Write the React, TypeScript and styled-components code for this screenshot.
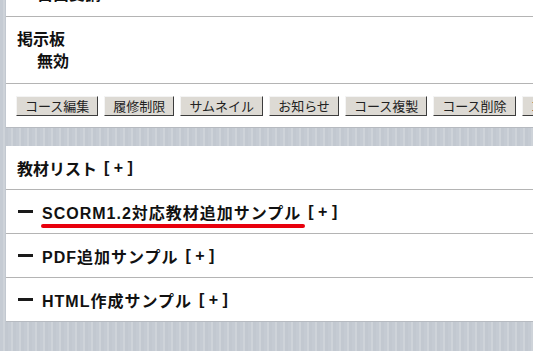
import styled, { createGlobalStyle } from "styled-components";

const GlobalStyle = createGlobalStyle`
  html, body {
    margin: 0;
    padding: 0;
    overflow: hidden;
  }
  body {
    width: 533px;
    height: 351px;
    font-family: "Liberation Sans", "Noto Sans CJK JP", sans-serif;
    background: repeating-linear-gradient(
      90deg,
      #c5cbd3 0px,
      #c5cbd3 3px,
      #ced3d9 3px,
      #ced3d9 5px,
      #c2c8d0 5px,
      #c2c8d0 8px
    );
  }
`;

const Page = styled.div`
  display: flex;
  flex-direction: column;
  gap: 18px;
  padding-left: 6px;
  width: 560px;
  margin-top: -50px;
`;

const Panel = styled.div`
  background: #fff;
  border-bottom: 1px solid #b6bac0;
  display: flex;
  flex-direction: column;
`;

const InfoBlock = styled.div`
  padding: 12px 0 10px 11px;
  border-bottom: 1px solid #b4b4b4;
  font-weight: 700;
  font-size: 16px;
  line-height: 22px;
  color: #111;
  .value {
    padding-left: 20px;
  }
`;

const ButtonRow = styled.div`
  display: flex;
  align-items: center;
  gap: 6px;
  height: 43px;
  padding-left: 10px;
`;

const Button = styled.button`
  flex-shrink: 0;
  height: 20px;
  padding: 0 8px;
  font-family: "Noto Sans CJK JP", sans-serif;
  font-size: 13px;
  line-height: 18px;
  color: #222;
  background: #dddad4;
  border: 1px solid;
  border-color: #f4f4f4 #3c3c3c #3c3c3c #f4f4f4;
`;

const ListRow = styled.div`
  display: flex;
  align-items: center;
  height: 43px;
  padding-left: 11px;
  font-size: 16px;
  font-weight: 700;
  color: #111;
  & + & {
    border-top: 1px solid #b4b4b4;
  }
  .plus {
    margin-left: 7px;
    white-space: pre;
  }
`;

const Dash = styled.span`
  width: 15px;
  height: 3px;
  background: #1a1a1a;
  margin: 0 9px 0 1px;
`;

const Title = styled.span<{ $marked?: boolean }>`
  position: relative;
  letter-spacing: 1px;
  ${(p) =>
    p.$marked &&
    `
    &::after {
      content: "";
      position: absolute;
      left: -1px;
      right: -4px;
      bottom: -4px;
      height: 4px;
      border-radius: 2px;
      background: #e8000d;
    }
  `}
`;

const buttons = [
  "コース編集",
  "履修制限",
  "サムネイル",
  "お知らせ",
  "コース複製",
  "コース削除",
  "コース一覧",
];

const items = [
  { title: "SCORM1.2対応教材追加サンプル", marked: true },
  { title: "PDF追加サンプル" },
  { title: "HTML作成サンプル" },
];

export default function App() {
  return (
    <>
      <GlobalStyle />
      <Page>
        <Panel>
          <InfoBlock>
            <div>受講設定</div>
            <div className="value">自由受講</div>
          </InfoBlock>
          <InfoBlock>
            <div>掲示板</div>
            <div className="value">無効</div>
          </InfoBlock>
          <ButtonRow>
            {buttons.map((b) => (
              <Button key={b}>{b}</Button>
            ))}
          </ButtonRow>
        </Panel>
        <Panel>
          <ListRow>
            <span>教材リスト</span>
            <span className="plus">[ + ]</span>
          </ListRow>
          {items.map((it) => (
            <ListRow key={it.title}>
              <Dash />
              <Title $marked={it.marked}>{it.title}</Title>
              <span className="plus">[ + ]</span>
            </ListRow>
          ))}
        </Panel>
      </Page>
    </>
  );
}
